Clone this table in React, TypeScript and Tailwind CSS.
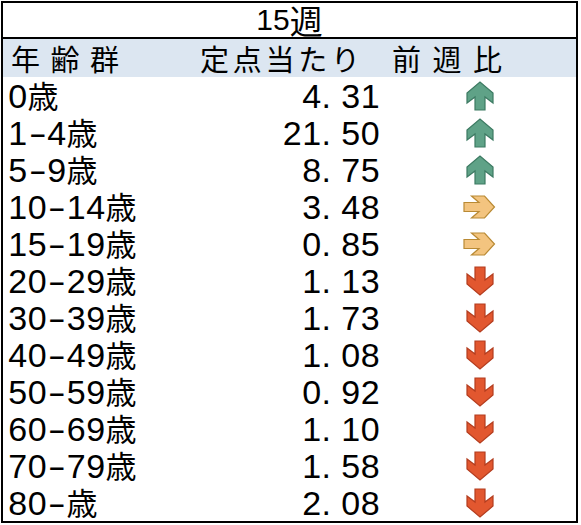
import React from "react";

type Dir = "up" | "right" | "down";

const rows: { age: string; value: string; dir: Dir }[] = [
  { age: "0歳", value: "4.31", dir: "up" },
  { age: "1-4歳", value: "21.50", dir: "up" },
  { age: "5-9歳", value: "8.75", dir: "up" },
  { age: "10-14歳", value: "3.48", dir: "right" },
  { age: "15-19歳", value: "0.85", dir: "right" },
  { age: "20-29歳", value: "1.13", dir: "down" },
  { age: "30-39歳", value: "1.73", dir: "down" },
  { age: "40-49歳", value: "1.08", dir: "down" },
  { age: "50-59歳", value: "0.92", dir: "down" },
  { age: "60-69歳", value: "1.10", dir: "down" },
  { age: "70-79歳", value: "1.58", dir: "down" },
  { age: "80-歳", value: "2.08", dir: "down" },
];

function MonoText({ text }: { text: string }) {
  return (
    <>
      {text.split("").map((ch, i) => {
        if (ch === ".") {
          return (
            <span
              key={i}
              className="inline-block w-[19.5px] text-left font-['Liberation_Sans',sans-serif] text-[34px]"
            >
              {ch}
            </span>
          );
        }
        if (ch === "-") {
          return (
            <span
              key={i}
              className="inline-block w-[19.5px] text-center font-['Liberation_Sans',sans-serif] text-[34px] scale-x-[1.6]"
            >
              {ch}
            </span>
          );
        }
        if (/[0-9]/.test(ch)) {
          return (
            <span
              key={i}
              className="inline-block w-[19.5px] text-center font-['Liberation_Sans',sans-serif] text-[34px]"
            >
              {ch}
            </span>
          );
        }
        return (
          <span
            key={i}
            className="font-['Noto_Sans_CJK_JP',sans-serif] text-[31px]"
          >
            {ch}
          </span>
        );
      })}
    </>
  );
}

function Arrow({ dir }: { dir: Dir }) {
  if (dir === "right") {
    return (
      <svg width="33" height="24" viewBox="0 0 33 24">
        <polygon
          points="1,7.5 16,7.5 8.5,1 21.5,1 31.5,12 21.5,23 8.5,23 16,16.5 1,16.5"
          fill="#f3c47f"
          stroke="#b98a34"
          strokeWidth="1.2"
        />
      </svg>
    );
  }
  if (dir === "up") {
    return (
      <svg width="28" height="30" viewBox="0 0 28 30">
        <polygon
          points="9,29 19,29 19,16 27,22 27,12 14,1 1,12 1,22 9,16"
          fill="#5fa287"
          stroke="#3c7a62"
          strokeWidth="1.2"
        />
      </svg>
    );
  }
  return (
    <svg width="28" height="30" viewBox="0 0 28 30">
      <polygon
        points="9,1 19,1 19,14 27,8 27,18 14,29 1,18 1,8 9,14"
        fill="#e2572f"
        stroke="#b33c1e"
        strokeWidth="1.2"
      />
    </svg>
  );
}

function Spread({ chars, className }: { chars: string; className: string }) {
  return (
    <div className={"flex justify-between " + className}>
      {chars.split("").map((c, i) => (
        <span key={i}>{c}</span>
      ))}
    </div>
  );
}

export default function App() {
  return (
    <div className="w-[581px] h-[525px] bg-white pl-px pt-px text-black">
      <div className="w-[577px] h-[522px] border-2 border-black flex flex-col">
        <div className="h-[36px] border-b-2 border-black flex items-center justify-center leading-none">
          <span className="font-['Liberation_Sans',sans-serif] text-[30px]">15</span>
          <span className="font-['Noto_Sans_CJK_JP',sans-serif] text-[33px]">週</span>
        </div>
        <div className="h-[38px] bg-[#dce6f1] grid grid-cols-[187px_193px_193px] items-center font-['Noto_Sans_CJK_JP',sans-serif] text-[29px] leading-none">
          <div className="pl-[8px]">
            <Spread chars="年齢群" className="w-[108px]" />
          </div>
          <div className="pl-[10px]">
            <Spread chars="定点当たり" className="w-[160px]" />
          </div>
          <div className="pl-[9px]">
            <Spread chars="前週比" className="w-[110px]" />
          </div>
        </div>
        {rows.map((r) => (
          <div
            key={r.age}
            className="h-[37px] grid grid-cols-[187px_193px_193px] items-center leading-none"
          >
            <div className="pl-[5px] whitespace-nowrap">
              <MonoText text={r.age} />
            </div>
            <div className="pr-[3px] text-right whitespace-nowrap">
              <MonoText text={r.value} />
            </div>
            <div className="flex justify-center items-center">
              <Arrow dir={r.dir} />
            </div>
          </div>
        ))}
      </div>
    </div>
  );
}
